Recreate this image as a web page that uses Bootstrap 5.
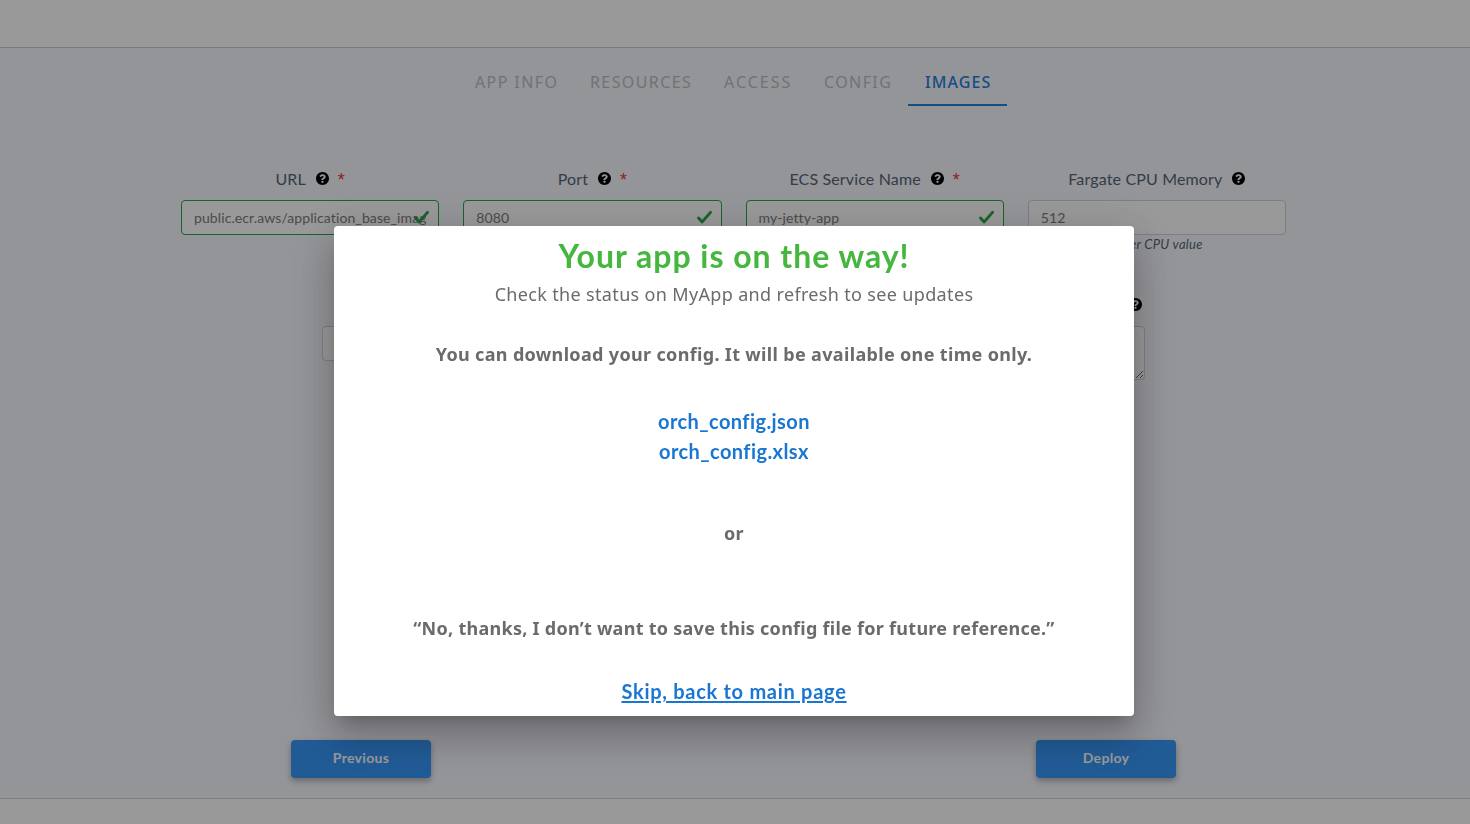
<!DOCTYPE html>
<html lang="en">
<head>
<meta charset="utf-8">
<meta name="viewport" content="width=device-width, initial-scale=1">
<title>Deploy app</title>
<link href="https://cdn.jsdelivr.net/npm/bootstrap@5.3.0/dist/css/bootstrap.min.css" rel="stylesheet">
<style>
body{font-family:Lato,sans-serif;background:#fff;height:824px;overflow:hidden}
.topbar{height:48px;border-bottom:1px solid #c8cdd2}
.page-main{height:751px;background:#f7f8ff;border-bottom:1px solid #d0d2d6;padding:0 3px 20px 0}
.steps{font-family:"Noto Sans",sans-serif;font-size:16px;letter-spacing:1.4px;height:58px;margin-right:1px}
.steps .nav-link{height:58px;padding:0 0 0 16px;line-height:68px;color:#bdbec2;white-space:nowrap;border-radius:0}
.steps .nav-link.active{color:#2480de;border-bottom:2px solid #2480de;font-weight:500;letter-spacing:1.1px;padding-left:17px}
.step-info{width:115px}.step-res{width:134px}.step-mid{width:100px}.step-img{width:99px}
.steps .step-wide{letter-spacing:2px}
.fields{width:1129px;margin-top:61px}
.field-label{height:26px;line-height:24px;margin-bottom:7px;font-size:16px;letter-spacing:.15px;color:#566676;white-space:nowrap}
.help-icon{width:13px;height:13px;margin:5px 0 0 10px}
.req{font-family:"Liberation Sans",sans-serif;font-size:18px;line-height:27px;color:#f03030;margin-left:9px;width:7px}
.form-control{height:35px;font-size:14px;letter-spacing:.1px;padding:0 12px 1px;color:#7c7d80;border-color:#ced4da;border-radius:4px}
.valid-box{border-color:#28a745}
textarea.form-control{height:54px}
.tick{right:10px;top:10px;width:15px;height:14px}
.hint{font-size:13px;letter-spacing:.3px;line-height:18px;height:18px;color:#566676}
.row-end-label{padding-right:3px}
.actions{width:885px}
.act{width:140px;height:38px;font-size:14px;letter-spacing:.3px;font-weight:700;background:#3798fa;border:0;color:#fff;border-radius:4px;box-shadow:0 3px 6px rgba(0,0,0,.3);padding:0 0 3px}
.shade{background:rgba(0,0,0,.4);padding:226px 0 0 334px}
.sheet{width:800px;height:490px;padding-top:10px;border-radius:4px;box-shadow:0 11px 15px -7px rgba(0,0,0,.2),0 24px 38px 3px rgba(0,0,0,.14),0 9px 46px 8px rgba(0,0,0,.12)}
.sheet p,.sheet h1{margin:0;white-space:nowrap}
.sheet .way{font-size:32px;font-weight:700;color:#45b63e;line-height:40px;letter-spacing:.98px;margin-bottom:3px}
.note{font-family:"Noto Sans",sans-serif;color:#6b6b6b;line-height:30px;font-size:18px;letter-spacing:.34px}
.sheet .files{margin:37px 0 52px}
.sheet .once{margin-top:30px}
.sheet .decline{margin:65px 0 33px;letter-spacing:.27px}
.dl{font-size:20px;font-weight:700;line-height:30px;letter-spacing:.42px;color:#1976d2;text-decoration:none}
.skip{letter-spacing:.72px;text-decoration:underline;text-underline-offset:2px;text-decoration-thickness:2px}
</style>
</head>
<body>
<svg class="d-none"><symbol id="q" viewBox="8 8 496 496"><path d="M504 256c0 137-111 248-248 248S8 393 8 256 119 8 256 8s248 111 248 248zM262.700 90c-54.500 0-89.300 23-116.500 63.800-3.500 5.300-2.400 12.400 2.700 16.300l34.700 26.300c5.200 3.900 12.600 3 16.700-2.100 17.900-22.700 30.100-35.800 57.300-35.800 20.400 0 45.700 13.100 45.700 33 0 15-12.400 22.700-32.500 34C247.100 238.500 216 254.900 216 296v4c0 6.600 5.400 12 12 12h56c6.600 0 12-5.400 12-12v-1.300c0-28.500 83.200-29.600 83.200-106.700 0-58-60.200-102-116.500-102zM256 338c-25.400 0-46 20.600-46 46s20.600 46 46 46 46-20.600 46-46-20.600-46-46-46z"/></symbol>
<symbol id="t" viewBox="0 0 15 14"><path fill="none" stroke="#28a745" stroke-width="2.900" stroke-linecap="round" stroke-linejoin="round" d="M1.500 8 5.200 11.900 13.500 2.400"/></symbol></svg>
<header class="topbar"></header>
<main class="page-main d-flex flex-column align-items-center">
<nav class="nav steps flex-nowrap">
<a class="nav-link step-info">APP INFO</a><a class="nav-link step-res">RESOURCES</a><a class="nav-link step-mid step-wide">ACCESS</a><a class="nav-link step-mid">CONFIG</a><a class="nav-link active step-img">IMAGES</a>
</nav>
<form class="fields">
<div class="row mx-0">
<div class="col-3"><div class="field-label d-flex justify-content-center">URL<svg class="help-icon"><use href="#q"/></svg><span class="req">*</span></div>
<div class="position-relative"><input class="form-control valid-box" value="public.ecr.aws/application_base_image"><svg class="tick position-absolute"><use href="#t"/></svg></div></div>
<div class="col-3"><div class="field-label d-flex justify-content-center">Port<svg class="help-icon"><use href="#q"/></svg><span class="req">*</span></div>
<div class="position-relative"><input class="form-control valid-box" value="8080"><svg class="tick position-absolute"><use href="#t"/></svg></div></div>
<div class="col-3"><div class="field-label d-flex justify-content-center">ECS Service Name<svg class="help-icon"><use href="#q"/></svg><span class="req">*</span></div>
<div class="position-relative"><input class="form-control valid-box" value="my-jetty-app"><svg class="tick position-absolute"><use href="#t"/></svg></div></div>
<div class="col-3"><div class="field-label d-flex justify-content-center">Fargate CPU Memory<svg class="help-icon"><use href="#q"/></svg></div>
<input class="form-control" value="512"><div class="hint fst-italic text-center">Enter CPU value</div></div>
</div>
<div class="row mx-0 pt-4 justify-content-center">
<div class="col-3 pt-3"><div class="field-label"></div><input class="form-control"></div>
<div class="col-3"></div>
<div class="col-3 pt-3"><div class="field-label d-flex justify-content-end row-end-label"><svg class="help-icon"><use href="#q"/></svg></div><textarea class="form-control"></textarea></div>
</div>
</form>
<div class="actions mt-auto d-flex justify-content-between"><button class="btn act">Previous</button><button class="btn act">Deploy</button></div>
</main>
<div class="position-fixed top-0 start-0 w-100 h-100 shade"><section class="sheet bg-white text-center">
<h1 class="way">Your app is on the way!</h1>
<p class="note">Check the status on MyApp and refresh to see updates</p>
<p class="note once fw-bold">You can download your config. It will be available one time only.</p>
<div class="files d-flex flex-column align-items-center"><a class="dl" href="#">orch_config.json</a><a class="dl" href="#">orch_config.xlsx</a></div>
<p class="note fw-bold">or</p>
<p class="note decline fw-bold">“No, thanks, I don’t want to save this config file for future reference.”</p>
<a class="dl skip d-inline-block" href="#">Skip, back to main page</a>
</section></div>
<script src="https://cdn.jsdelivr.net/npm/bootstrap@5.3.0/dist/js/bootstrap.bundle.min.js"></script>
</body>
</html>
